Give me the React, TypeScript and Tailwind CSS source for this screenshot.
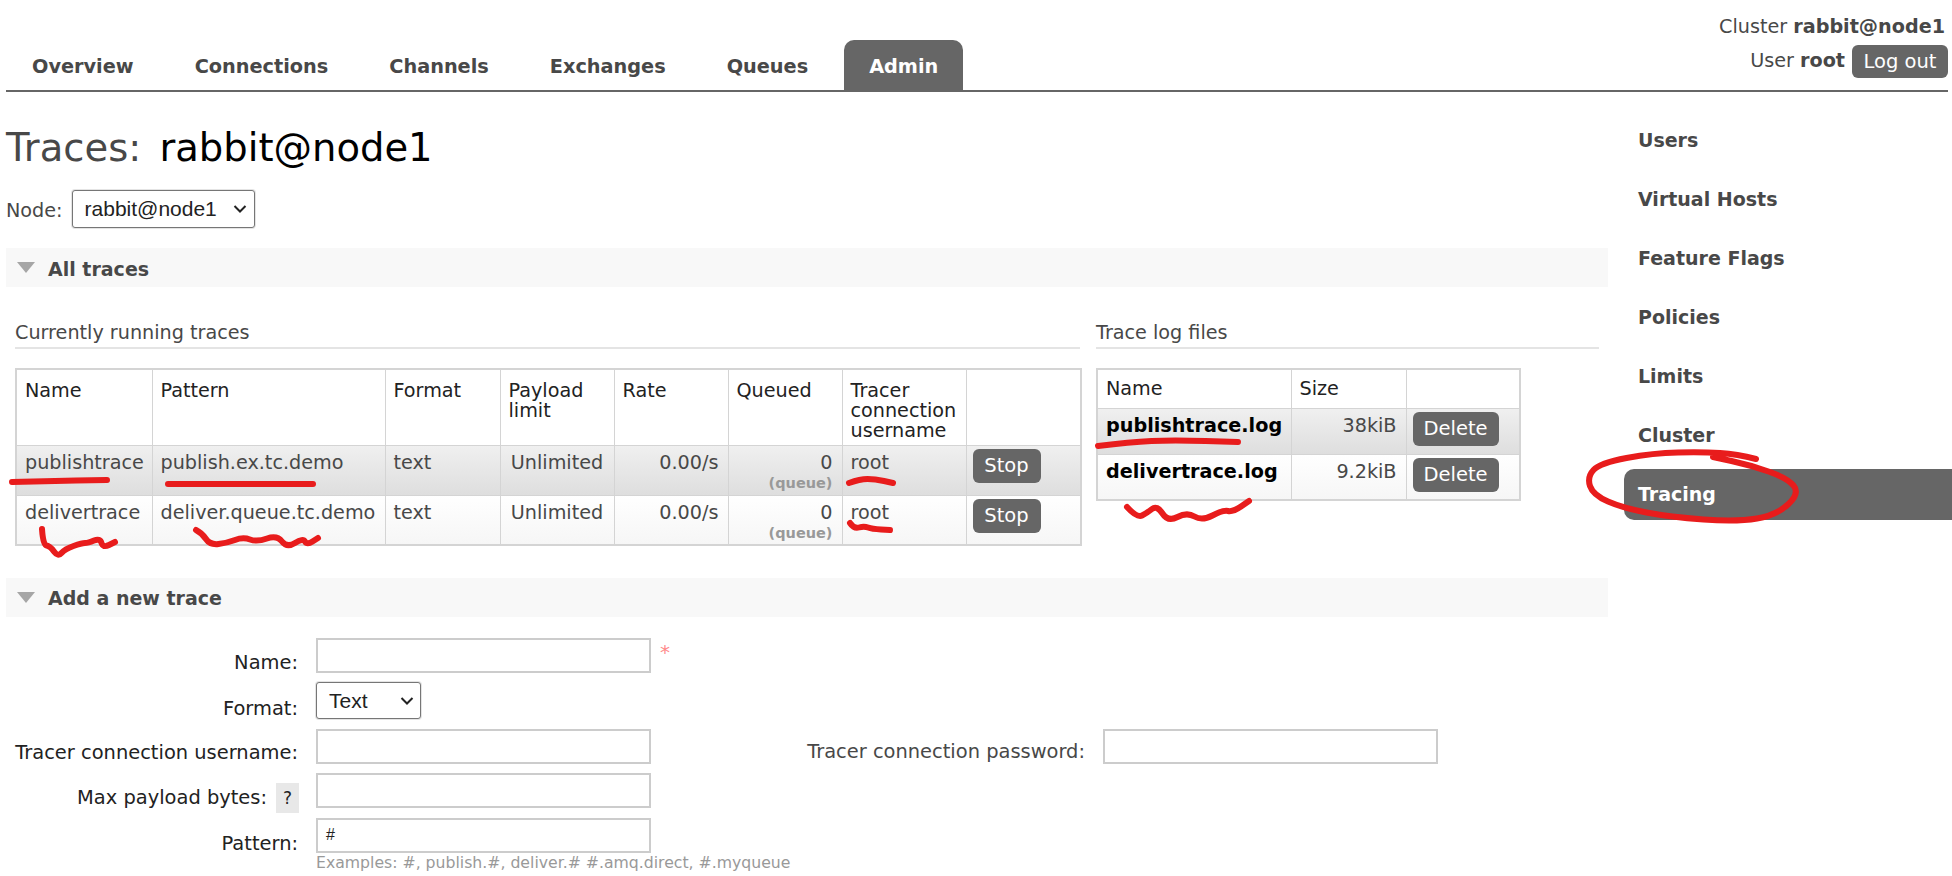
const tabs = [
  { t: "Overview" },
  { t: "Connections" },
  { t: "Channels" },
  { t: "Exchanges" },
  { t: "Queues" },
  { t: "Admin", active: true },
];
const side = ["Users", "Virtual Hosts", "Feature Flags", "Policies", "Limits", "Cluster", "Tracing"];

function Caret() {
  return (
    <svg width="18" height="11" viewBox="0 0 18 11" className="shrink-0">
      <polygon points="0,0 18,0 9,11" fill="#a6a6a6" />
    </svg>
  );
}

function Btn({ children, cls }: { children: string; cls: string }) {
  return (
    <span className={"flex items-center justify-center rounded-[6px] bg-[#666666] text-white text-[19.5px] " + cls}>{children}</span>
  );
}

function Bar({ title }: { title: string }) {
  return (
    <div className="h-[39px] bg-[#f8f8f8] flex items-center pl-[11px] gap-[13px]">
      <Caret />
      <span className="font-bold text-[19px] text-[#484848] pt-[3px]">{title}</span>
    </div>
  );
}

const cell = "border border-[#d4d4d4] align-top pl-[8px] pr-0 pb-0";

function Row({ name, pattern, alt, h }: { name: string; pattern: string; alt: boolean; h: string }) {
  const c = cell + " pt-[7px] leading-[20px]";
  return (
    <tr className={(alt ? "bg-gradient-to-b from-[#f0f0f0] to-[#dedede]" : "bg-gradient-to-b from-[#ffffff] to-[#f6f6f6]") + " text-[#484848] " + h}>
      <td className={c}>{name}</td>
      <td className={c}>{pattern}</td>
      <td className={c}>text</td>
      <td className={c + " text-center !pl-0"}>Unlimited</td>
      <td className={c + " text-right !pl-0 !pr-[9px]"}>0.00/s</td>
      <td className={c + " text-right !pl-0 !pr-[9px]"}>
        <div>0</div>
        <div className="text-[14.5px] font-bold text-[#999999] leading-[21px]">(queue)</div>
      </td>
      <td className={c}>root</td>
      <td className="border border-[#d4d4d4] align-top pl-[6px] pt-[3px]">
        <Btn cls="w-[68px] h-[34px]">Stop</Btn>
      </td>
    </tr>
  );
}

function LogRow({ name, size, alt }: { name: string; size: string; alt: boolean }) {
  const c = cell + " pt-[6px] leading-[22px]";
  return (
    <tr className={(alt ? "bg-gradient-to-b from-[#f0f0f0] to-[#dedede]" : "bg-gradient-to-b from-[#ffffff] to-[#f6f6f6]") + " h-[46px] text-[#484848]"}>
      <td className={c + " font-bold text-black"}>{name}</td>
      <td className={c + " text-right !pl-0 !pr-[9px]"}>{size}</td>
      <td className="border border-[#d4d4d4] align-top pl-[6px] pt-[3px]">
        <Btn cls="w-[86px] h-[34px]">Delete</Btn>
      </td>
    </tr>
  );
}

function Field({ w = "w-[335px]" }: { w?: string }) {
  return <div className={"h-[35px] border-2 border-[#cccccc] bg-white " + w} />;
}

function Sel({ label, cls, gap }: { label: string; cls: string; gap: string }) {
  return (
    <div className={"flex items-center justify-between border border-[#767676] rounded-[3px] bg-white text-[#222222] text-[21px] font-['Liberation_Sans',_Arial,_sans-serif] pl-[12px] shadow-[0_0_0_1px_#e4e4e4] " + cls}>
      <span>{label}</span>
      <svg width="14" height="8" viewBox="0 0 14 8" className={gap}>
        <path d="M1.5 1 L7 6.5 L12.5 1" fill="none" stroke="#222222" strokeWidth="2" />
      </svg>
    </div>
  );
}

const marks: [number, number][][] = [
  [[12, 482], [45, 481], [107, 480]],
  [[168, 484], [240, 484], [313, 484]],
  [[849, 483], [860, 479], [875, 479], [893, 483]],
  [[42, 529], [43, 545], [50, 546], [58, 557], [65, 549], [82, 543], [88, 543], [100, 538], [103, 548], [115, 542]],
  [[196, 530], [202, 533], [210, 545], [227, 543], [243, 537], [257, 542], [277, 535], [287, 548], [303, 538], [307, 545], [318, 538]],
  [[850, 523], [854, 529], [864, 526], [872, 529], [890, 530]],
  [[1098, 446], [1130, 442], [1173, 440], [1238, 442]],
  [[1127, 507], [1137, 518], [1147, 513], [1157, 505], [1168, 522], [1187, 512], [1202, 521], [1223, 510], [1233, 512], [1249, 501]],
  [[1756, 459], [1737, 454], [1703, 452], [1653, 453], [1600, 463], [1587, 477], [1593, 495], [1623, 508], [1670, 517], [1737, 522], [1777, 515], [1800, 493], [1787, 478], [1750, 465], [1713, 457]],
];

function smooth(p: [number, number][]) {
  let d = `M${p[0][0]} ${p[0][1]}`;
  for (let i = 1; i < p.length - 1; i++) {
    const mx = (p[i][0] + p[i + 1][0]) / 2;
    const my = (p[i][1] + p[i + 1][1]) / 2;
    d += ` Q${p[i][0]} ${p[i][1]} ${mx} ${my}`;
  }
  const l = p[p.length - 1];
  return d + ` L${l[0]} ${l[1]}`;
}

function Annotations() {
  return (
    <svg className="absolute left-0 top-0 pointer-events-none" width="1952" height="876" viewBox="0 0 1952 876">
      {marks.map((m, i) => (
        <path key={i} d={smooth(m)} fill="none" stroke="#e81c1c" strokeWidth="6" strokeLinecap="round" strokeLinejoin="round" />
      ))}
    </svg>
  );
}

export default function App() {
  return (
    <div className="relative w-[1952px] h-[876px] overflow-hidden bg-white text-[#484848] text-[19.2px] font-['DejaVu_Sans',_Verdana,_sans-serif]">
      <header className="ml-[6px] mr-[4px] h-[92px] border-b-2 border-[#666666] flex justify-between items-end">
        <nav className="flex gap-[11px] -mb-[1px] ml-[1px]">
          {tabs.map((t) => (
            <span
              key={t.t}
              className={"h-[51px] px-[25px] pt-[3px] flex items-center font-bold text-[19.3px] rounded-t-[10px] " + (t.active ? "bg-[#666666] text-white" : "text-[#484848]")}
            >
              {t.t}
            </span>
          ))}
        </nav>
        <div className="self-start flex flex-col items-end pt-[16px]">
          <div className="h-[22px] leading-[22px] pr-[3px] whitespace-nowrap">
            Cluster <b>rabbit@node1</b>
          </div>
          <div className="flex items-center gap-[7px] mt-[7px]">
            <span>
              User <b>root</b>
            </span>
            <Btn cls="w-[96px] h-[33px]">Log out</Btn>
          </div>
        </div>
      </header>

      <div className="flex">
        <main className="ml-[6px] w-[1602px] shrink-0">
          <h1 className="mt-[34px] h-[44px] leading-[44px] text-[38.5px] font-normal text-[#484848]">
            Traces: <span className="text-black ml-[6px]">rabbit@node1</span>
          </h1>
          <div className="mt-[20px] flex items-center gap-[9px] h-[38px]">
            <span className="pt-[5px]">Node:</span>
            <Sel label="rabbit@node1" cls="w-[183px] h-[38px]" gap="mr-[7px]" />
          </div>
          <div className="mt-[20px]">
            <Bar title="All traces" />
          </div>

          <div className="flex pl-[9px] gap-[16px] mt-[34px]">
            <section className="w-[1065px] shrink-0">
              <h3 className="h-[26px] text-[19.2px] leading-[24px] border-b-2 border-[#e4e4e4] box-content">Currently running traces</h3>
              <table className="mt-[19px] w-[1065px] table-fixed border-collapse border-2 border-[#d4d4d4]">
                <colgroup>
                  <col className="w-[136px]" />
                  <col className="w-[233px]" />
                  <col className="w-[115px]" />
                  <col className="w-[114px]" />
                  <col className="w-[114px]" />
                  <col className="w-[114px]" />
                  <col className="w-[124px]" />
                  <col className="w-[115px]" />
                </colgroup>
                <thead>
                  <tr className="h-[76px] text-[#222222]">
                    {["Name", "Pattern", "Format", "Payload limit", "Rate", "Queued", "Tracer connection username", ""].map((h, i) => (
                      <td key={i} className={cell + " pt-[11px] leading-[20px]"}>
                        {h}
                      </td>
                    ))}
                  </tr>
                </thead>
                <tbody>
                  <Row name="publishtrace" pattern="publish.ex.tc.demo" alt h="h-[50px]" />
                  <Row name="delivertrace" pattern="deliver.queue.tc.demo" alt={false} h="h-[49px]" />
                </tbody>
              </table>
            </section>
            <section className="w-[503px] shrink-0">
              <h3 className="h-[26px] text-[19.2px] leading-[24px] border-b-2 border-[#e4e4e4] box-content">Trace log files</h3>
              <table className="mt-[19px] w-[423px] table-fixed border-collapse border-2 border-[#d4d4d4]">
                <colgroup>
                  <col className="w-[194px]" />
                  <col className="w-[115px]" />
                  <col className="w-[114px]" />
                </colgroup>
                <thead>
                  <tr className="h-[39px] text-[#222222]">
                    {["Name", "Size", ""].map((h, i) => (
                      <td key={i} className={cell + " pt-[8px] leading-[22px]"}>
                        {h}
                      </td>
                    ))}
                  </tr>
                </thead>
                <tbody>
                  <LogRow name="publishtrace.log" size="38kiB" alt />
                  <LogRow name="delivertrace.log" size="9.2kiB" alt={false} />
                </tbody>
              </table>
            </section>
          </div>

          <div className="mt-[32px]">
            <Bar title="Add a new trace" />
          </div>

          <div className="mt-[21px] grid grid-cols-[292px_auto_452px_auto] justify-start gap-y-[9.5px] text-[19.45px] text-[#222222] [&>div]:whitespace-nowrap">
            <div className="text-right h-[35px] leading-[50px]">Name:</div>
            <div className="pl-[18px] flex gap-[9px] col-span-3">
              <Field />
              <span className="text-[#ff8a8a] text-[20px] leading-[28px]">*</span>
            </div>

            <div className="text-right h-[37px] leading-[53px]">Format:</div>
            <div className="pl-[18px] col-span-3">
              <Sel label="Text" cls="w-[105px] h-[37px]" gap="mr-[6px]" />
            </div>

            <div className="text-right h-[35px] leading-[48px]">Tracer connection username:</div>
            <div className="pl-[18px]">
              <Field />
            </div>
            <div className="text-right h-[35px] leading-[46px] text-[#484848] pr-[18px]">Tracer connection password:</div>
            <div>
              <Field />
            </div>

            <div className="h-[35px] flex justify-end items-center gap-[9px] pt-[15px] -mr-[1px]">
              <span>Max payload bytes:</span>
              <span className="w-[23px] h-[30px] bg-[#e8e8e8] text-center leading-[30px] text-[17px]">?</span>
            </div>
            <div className="pl-[18px] col-span-3">
              <Field />
            </div>

            <div className="text-right h-[35px] leading-[52px]">Pattern:</div>
            <div className="pl-[18px] col-span-3">
              <div className="h-[35px] w-[335px] border-2 border-[#cccccc] pl-[8px] text-[16px] leading-[30px] text-[#222222] font-['Liberation_Sans',_Arial,_sans-serif]">#</div>
              <div className="text-[15.7px] text-[#999999] leading-[20px]">Examples: #, publish.#, deliver.# #.amq.direct, #.myqueue</div>
            </div>
          </div>
        </main>

        <aside className="ml-[16px] flex-1 pt-[23px] flex flex-col gap-[8px]">
          {side.map((s) => (
            <div
              key={s}
              className={"h-[51px] pl-[14px] flex items-center font-bold text-[19px] rounded-l-[10px] " + (s === "Tracing" ? "bg-[#666666] text-white" : "text-[#484848]")}
            >
              {s}
            </div>
          ))}
        </aside>
      </div>
      <Annotations />
    </div>
  );
}
